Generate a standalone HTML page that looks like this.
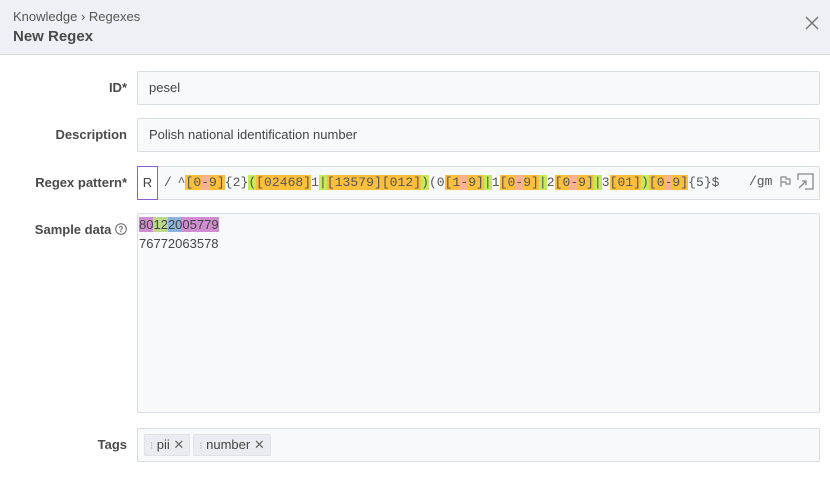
<!DOCTYPE html>
<html><head><meta charset="utf-8"><style>
*{box-sizing:border-box;margin:0;padding:0}
body{width:830px;height:478px;background:#fff;font-family:"Liberation Sans",sans-serif;color:#444;overflow:hidden;position:relative}
.hdr{position:absolute;left:0;top:0;width:830px;height:55px;background:#edf0f4;border-bottom:1px solid #d5d9de}
.bc{position:absolute;left:13px;top:9px;font-size:13px;color:#555}
.ttl{position:absolute;left:13px;top:28px;font-size:15px;font-weight:bold;color:#4a4a4a}
.x{position:absolute;right:11px;top:16px}
.lbl{position:absolute;right:703px;font-size:13px;font-weight:bold;color:#4a4a4a;text-align:right;white-space:nowrap}
.inp{position:absolute;left:137px;width:683px;background:#f7f9fb;border:1px solid #d8dde3;border-radius:2px;font-size:13px;color:#444}
.mono{font-family:"Liberation Mono",monospace;font-size:13px;color:#555}
.o{background:#fbbf3c}.r{background:#f9b194}.g{background:#c6ea5a}
.tag{display:inline-block;background:#e9edf1;border:1px solid #dfe3e8;border-radius:2px;height:22px;line-height:20px;padding:0 5px;font-size:13px;color:#444;margin-right:3px}
</style></head><body>
<div class="hdr">
<div class="bc">Knowledge › Regexes</div>
<div class="ttl">New Regex</div>
<svg class="x" width="14" height="14" viewBox="0 0 14 14"><path d="M1 1L13 13M13 1L1 13" stroke="#777" stroke-width="1.5"/></svg>
</div>

<div class="lbl" style="top:80px">ID*</div>
<div class="inp" style="top:71px;height:34px;padding:8px 11px">pesel</div>

<div class="lbl" style="top:127px">Description</div>
<div class="inp" style="top:118px;height:34px;padding:8px 11px">Polish national identification number</div>

<div class="lbl" style="top:175px">Regex pattern*</div>
<div class="inp" style="top:166px;height:34px"></div>
<div style="position:absolute;left:137px;top:166px;width:21px;height:34px;border:1px solid #8a5cd6;background:#fff;font-size:13px;text-align:center;line-height:32px;color:#444">R</div>
<div class="mono" style="position:absolute;left:164px;top:174px;white-space:pre;line-height:17px">/<span style="letter-spacing:-2px"> </span><span style="letter-spacing:0.05px">^<span class="o">[0</span><span class="r">-</span><span class="o">9]</span>{2}<span class="g">(</span><span class="o">[02468]</span>1<span class="g">|</span><span class="o">[13579][012]</span><span class="g">)</span>(0<span class="o">[1</span><span class="r">-</span><span class="o">9]</span><span class="g">|</span>1<span class="o">[0</span><span class="r">-</span><span class="o">9]</span><span class="g">|</span>2<span class="o">[0</span><span class="r">-</span><span class="o">9]</span><span class="g">|</span>3<span class="o">[01]</span><span class="g">)</span><span class="o">[0</span><span class="r">-</span><span class="o">9]</span>{5}$</span></div>
<div class="mono" style="position:absolute;left:749px;top:174px">/gm</div>
<svg style="position:absolute;left:779px;top:175px" width="13" height="13" viewBox="0 0 13 13"><path d="M2 12V2h5v2h4v5H7V7H2" fill="none" stroke="#888" stroke-width="1.2"/></svg>
<svg style="position:absolute;left:797px;top:173px" width="17" height="17" viewBox="0 0 17 17"><path d="M1 7V1h15v15H8M2 15L9 8M5 8h4v4" fill="none" stroke="#888" stroke-width="1.3"/></svg>

<div class="lbl" style="top:222px;right:703px">Sample data <svg width="12" height="12" viewBox="0 0 12 12" style="vertical-align:-1px"><circle cx="6" cy="6" r="5.3" fill="none" stroke="#666"/><text x="6" y="9" font-size="8" text-anchor="middle" fill="#666" font-family="Liberation Sans">?</text></svg></div>
<div class="inp" style="top:213px;height:200px;padding:1px 0 0 1px;line-height:19px;color:#444">
<div><span style="background:#d08ed0">80</span><span style="background:#bcd98a">12</span><span style="background:#8ab3dc">20</span><span style="background:#d08ed0">05779</span></div>
<div>76772063578</div>
</div>

<div class="lbl" style="top:437px">Tags</div>
<div class="inp" style="top:428px;height:34px;padding:5px 6px">
<span class="tag"><span style="color:#aaa;font-size:10px">⁝</span> pii <span style="color:#666">✕</span></span><span class="tag"><span style="color:#aaa;font-size:10px">⁝</span> number <span style="color:#666">✕</span></span>
</div>
</body></html>
